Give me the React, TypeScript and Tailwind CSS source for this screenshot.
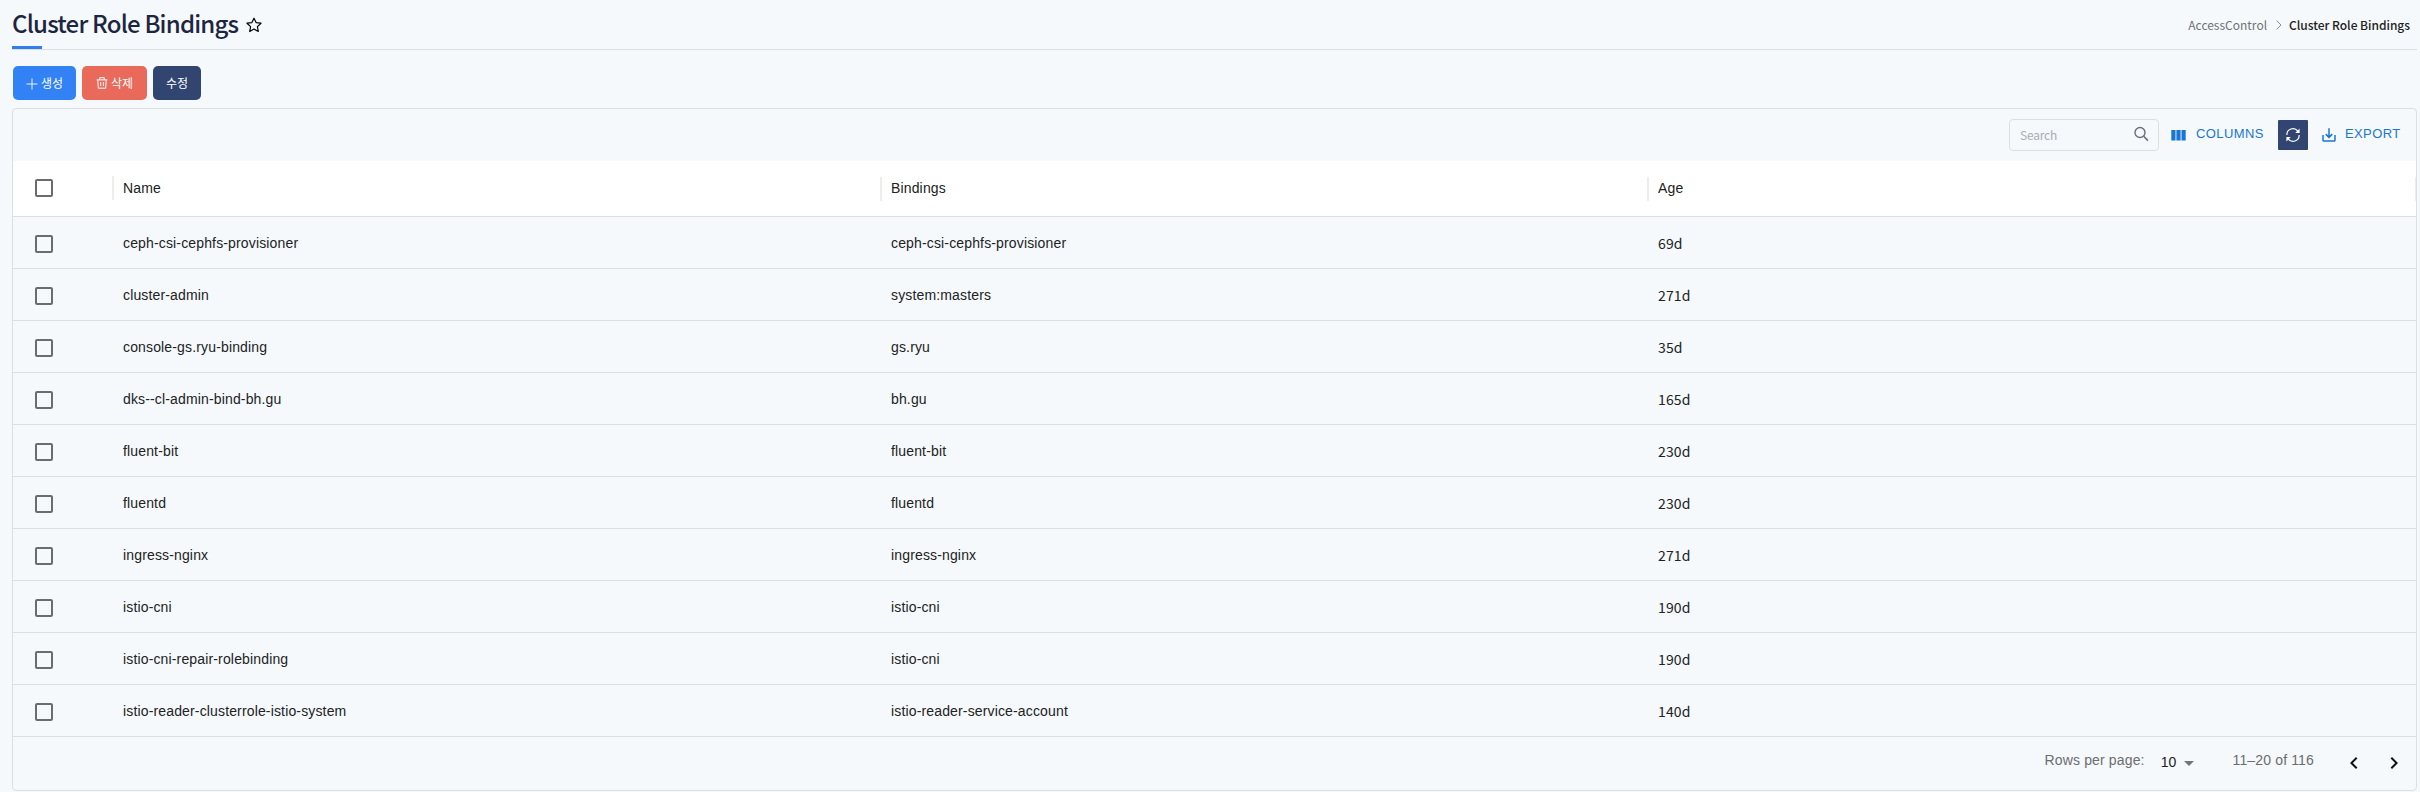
import React from "react";

const rows: [string, string, string][] = [
  ["ceph-csi-cephfs-provisioner", "ceph-csi-cephfs-provisioner", "69d"],
  ["cluster-admin", "system:masters", "271d"],
  ["console-gs.ryu-binding", "gs.ryu", "35d"],
  ["dks--cl-admin-bind-bh.gu", "bh.gu", "165d"],
  ["fluent-bit", "fluent-bit", "230d"],
  ["fluentd", "fluentd", "230d"],
  ["ingress-nginx", "ingress-nginx", "271d"],
  ["istio-cni", "istio-cni", "190d"],
  ["istio-cni-repair-rolebinding", "istio-cni", "190d"],
  ["istio-reader-clusterrole-istio-system", "istio-reader-service-account", "140d"],
];

const Checkbox = () => (
  <svg viewBox="0 0 24 24" className="size-6 fill-[#6b6c6d]">
    <path d="M19 5v14H5V5h14m0-2H5c-1.1 0-2 .9-2 2v14c0 1.1.9 2 2 2h14c1.1 0 2-.9 2-2V5c0-1.1-.9-2-2-2z" />
  </svg>
);

const Separator = () => <span className="h-6 w-0.5 shrink-0 bg-[#ededed]" />;

const HeadCell = ({ label, width }: { label: string; width: string }) => (
  <div className={"flex shrink-0 items-center " + width}>
    <span className="grow pl-[9px]">{label}</span>
    <Separator />
  </div>
);

export default function App() {
  return (
    <div className="h-[792px] w-[2420px] overflow-hidden bg-[#f5f9fc] pr-[3px] pl-3 font-['Noto_Sans_CJK_KR',sans-serif]">
      <header className="flex h-[50px] justify-between border-b border-[#dcdfe2]">
        <div className="flex w-[300px] flex-col justify-between">
          <div className="flex h-[46px] items-center gap-2">
            <h1 className="text-[24px] leading-[46px] font-medium tracking-[-0.8px] text-[#1d2640]">Cluster Role Bindings</h1>
            <svg viewBox="0 0 16 16" className="mt-[3px] size-4 fill-none stroke-black">
              <path d="M8 1.2 10.1 5.6 15 6.2 11.4 9.6 12.3 14.5 8 12.1 3.7 14.5 4.6 9.6 1 6.2 5.9 5.6Z" strokeWidth="1.2" strokeLinejoin="round" />
            </svg>
          </div>
          <div className="h-[3px] w-[30px] bg-[#2f80ed]" />
        </div>
        <nav className="flex items-center pt-px pr-[7px] text-[12px]">
          <span className="text-[#6f7276]">AccessControl</span>
          <svg viewBox="0 0 6 10" className="ml-[9px] h-[10px] w-1.5 fill-none stroke-[#6f7276]">
            <path d="M.5.5 5 5 .5 9.5" strokeWidth=".8" />
          </svg>
          <span className="ml-[7px] font-medium tracking-[-0.03px] text-[#222]">Cluster Role Bindings</span>
        </nav>
      </header>

      <div className="flex gap-1.5 pt-4 pl-px text-[12px] text-white">
        <button className="flex h-[34px] w-[63px] items-center justify-center gap-[3px] rounded-[5px] bg-[#3282f6]">
          <svg viewBox="0 0 12 12" className="mt-px size-3 fill-none stroke-white">
            <path d="M6 .5v11M.5 6h11" strokeWidth=".9" />
          </svg>
          생성
        </button>
        <button className="flex h-[34px] w-[65px] items-center justify-center gap-[3px] rounded-[5px] bg-[#e9695a]">
          <svg viewBox="0 0 12 12" className="size-3 fill-none stroke-white">
            <path d="M.6 2.900h10.800M3.700 2.900V.7h4.600v2.200M1.800 3l.5 8.200h7.400l.5-8.200M4.700 5v4.200M7.300 5v4.200" strokeWidth="1" />
          </svg>
          삭제
        </button>
        <button className="h-[34px] w-12 rounded-[5px] bg-[#324571]">수정</button>
      </div>

      <section className="mt-2 flex h-[683px] w-[2405px] flex-col overflow-hidden rounded border border-[#dcdfe2] font-['Liberation_Sans',Arial,sans-serif] text-[14px] tracking-[0.15px] text-[#212223]">
        <div className="flex h-[52px] items-center justify-end pr-[15px] text-[13px] tracking-[0.39px] text-[#1976d2]">
          <div className="flex h-8 w-[150px] items-center justify-between rounded border border-[#dcdfe2] pr-[9px] pl-[10px] font-['Noto_Sans_CJK_KR',sans-serif]">
            <span className="text-[12px] tracking-[-0.2px] text-[#a9adb3]">Search</span>
            <svg viewBox="0 0 16 16" className="mb-[2px] size-4 fill-none stroke-[#6a6e80]">
              <circle cx="7" cy="6.5" r="5" strokeWidth="1.4" />
              <path d="m10.7 10.2 4.2 4.4" strokeWidth="1.6" />
            </svg>
          </div>
          <svg viewBox="0 0 18 18" className="ml-[10px] size-[18px] fill-[#1976d2]">
            <path d="M2.300 4h4.200v10.500H2.300zM7.400 4h4.200v10.500H7.400zM12.500 4h4.200v10.500h-4.200z" />
          </svg>
          <span className="mb-[3px] ml-[9px] w-[67px] whitespace-nowrap">COLUMNS</span>
          <button className="ml-[15px] flex size-[30px] items-center justify-center rounded-[1px] bg-[#324571]">
            <svg viewBox="0 0 16 16" className="size-4 fill-none stroke-white">
              <path d="M1.900 8A6 6 0 0 1 12.800 4.200M14.100 8A6 6 0 0 1 3.200 11.800" strokeWidth="1.2" />
              <path d="M14.600 1.500V5.900H10.200zM1.400 14.500V10.100H5.800z" className="fill-white" stroke="none" />
            </svg>
          </button>
          <svg viewBox="0 0 24 24" className="ml-[12px] size-[18px] fill-[#1976d2]">
            <path d="M19 12v7H5v-7H3v7c0 1.100.9 2 2 2h14c1.100 0 2-.9 2-2v-7h-2zm-6 .67l2.590-2.580L17 11.500l-5 5-5-5 1.410-1.410L11 12.670V3h2z" />
          </svg>
          <span className="mb-[3px] ml-[7px] w-[56px] whitespace-nowrap">EXPORT</span>
        </div>
        <div className="flex h-14 items-center border-b border-[#dcdfe2] bg-white">
          <div className="flex w-[101px] shrink-0 items-center justify-between pb-px pl-[19px]">
            <Checkbox />
            <Separator />
          </div>
          <HeadCell label="Name" width="w-[768px]" />
          <HeadCell label="Bindings" width="w-[767px]" />
          <HeadCell label="Age" width="w-[768px]" />
        </div>
        {rows.map(([name, binding, age]) => (
          <div key={name} className="flex h-[52px] items-center border-b border-[#dcdfe2]">
            <div className="w-[101px] pt-[3px] pl-[19px]"><Checkbox /></div>
            <div className="w-[768px] pt-0.5 pl-[9px]">{name}</div>
            <div className="w-[767px] pt-0.5 pl-[9px]">{binding}</div>
            <div className="pt-px pl-[9px] font-['Noto_Sans_CJK_KR',sans-serif]">{age}</div>
          </div>
        ))}
        <footer className="flex grow items-center justify-end pb-px text-[#6b6d70]">
          <span className="pb-[5px]">Rows per page:</span>
          <span className="ml-4 pb-px text-[#212223]">10</span>
          <svg viewBox="0 0 10 5" className="ml-[7px] h-[5px] w-[10px] fill-[#757678]"><path d="M0 0h10L5 5z" /></svg>
          <span className="ml-[39px] pb-[5px]">11–20 of 116</span>
          <svg viewBox="0 0 24 24" className="ml-7 size-6 fill-[#111]">
            <path d="M15.410 16.590 10.830 12l4.580-4.590L14 6l-6 6 6 6z" />
          </svg>
          <svg viewBox="0 0 24 24" className="mr-[10px] ml-4 size-6 fill-[#111]">
            <path d="M8.590 16.590 13.170 12 8.590 7.410 10 6l6 6-6 6z" />
          </svg>
        </footer>
      </section>
    </div>
  );
}
